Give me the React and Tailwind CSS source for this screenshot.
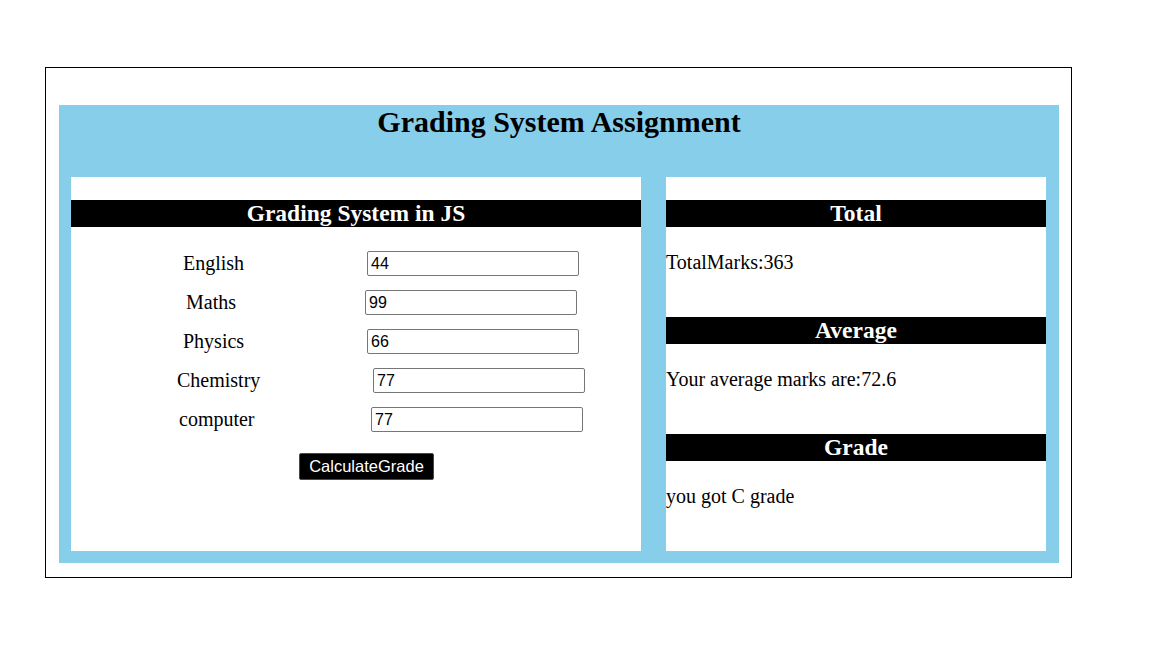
import React, { useState } from "react";

const subjects = [
  { name: "English", value: "44", labelClass: "ml-[112px] w-[184px]" },
  { name: "Maths", value: "99", labelClass: "ml-[115px] w-[179px]" },
  { name: "Physics", value: "66", labelClass: "ml-[112px] w-[184px]" },
  { name: "Chemistry", value: "77", labelClass: "ml-[106px] w-[196px]" },
  { name: "computer", value: "77", labelClass: "ml-[108px] w-[192px]" },
];

const getGrade = (avg) => {
  if (avg >= 90) return "A";
  if (avg >= 80) return "B";
  if (avg >= 70) return "C";
  if (avg >= 60) return "D";
  return "F";
};

const Bar = ({ children, className = "" }) => (
  <h2 className={`bg-black text-white text-center font-bold text-[23.5px] leading-[27px] h-[27px] ${className}`}>
    {children}
  </h2>
);

const App = () => {
  let [marks, setMarks] = useState(subjects.map((s) => s.value));
  let [result, setResult] = useState({ total: 363, avg: 72.6, grade: "C" });

  const calculate = (e) => {
    e.preventDefault();
    const total = marks.reduce((sum, m) => sum + (parseFloat(m) || 0), 0);
    const avg = total / marks.length;
    setResult({ total, avg, grade: getGrade(avg) });
  };

  return (
    <div className="pt-[67px] pl-[45px] font-['Liberation_Serif',serif] text-black">
      <div className="w-[1027px] h-[511px] border border-black pl-[13px] pr-[12px] pt-[37px] pb-[14px]">
        <div className="bg-[#87ceeb] h-[458px] pl-[12px]">
          <h1 className="text-center font-bold text-[30px] leading-[34px] h-[72px] pr-[12px]">
            Grading System Assignment
          </h1>

          <div className="flex gap-[25px]">
            <form onSubmit={calculate} className="bg-white w-[570px] h-[374px] pt-[23px]">
              <Bar>Grading System in JS</Bar>
              <div className="flex flex-col gap-[14px] mt-[24px]">
                {subjects.map((s, i) => (
                  <div key={s.name} className="flex items-center h-[25px]">
                    <label className={`text-[20px] leading-[23px] ${s.labelClass}`}>{s.name}</label>
                    <input
                      type="text"
                      value={marks[i]}
                      onChange={(e) =>
                        setMarks((prev) => prev.map((m, j) => (j === i ? e.target.value : m)))
                      }
                      className="w-[212px] h-[25px] border border-[#767676] rounded-[2px] px-[3px] font-['Liberation_Sans',Arial,sans-serif] text-[16px] outline-none"
                    />
                  </div>
                ))}
              </div>
              <button
                type="submit"
                className="block mt-[21px] ml-[228px] w-[135px] h-[27px] pb-[2px] bg-black text-white border border-[#4a4a4a] rounded-[2px] font-['Liberation_Sans',Arial,sans-serif] text-[16.5px] leading-[20px]"
              >
                CalculateGrade
              </button>
            </form>

            <div className="bg-white w-[380px] h-[374px] pt-[23px] text-[20px] leading-[23px]">
              <Bar>Total</Bar>
              <p className="mt-[24px]">TotalMarks:{result.total}</p>
              <Bar className="mt-[43px]">Average</Bar>
              <p className="mt-[24px]">Your average marks are:{result.avg}</p>
              <Bar className="mt-[43px]">Grade</Bar>
              <p className="mt-[24px]">you got {result.grade} grade</p>
            </div>
          </div>
        </div>
      </div>
    </div>
  );
};

export default App;
